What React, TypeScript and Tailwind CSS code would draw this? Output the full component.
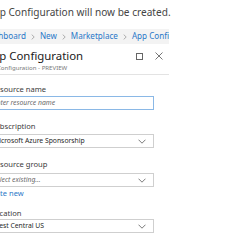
import React from "react";

const Chevron = () => (
  <svg width="8" height="5" viewBox="0 0 8 5" fill="none" className="shrink-0">
    <path d="M0.5 0.7 L4 4.2 L7.5 0.7" stroke="#6b6b6b" strokeWidth="0.9" />
  </svg>
);

const Sep = () => (
  <span className="flex w-[14px] shrink-0 justify-center">
    <svg width="4" height="6" viewBox="0 0 4 6" fill="none">
      <path d="M0.7 0.6 L3.2 3 L0.7 5.4" stroke="#9a9a9a" strokeWidth="0.8" />
    </svg>
  </span>
);

function Box({
  text,
  italic,
  focused,
  chevron,
}: {
  text: string;
  italic?: boolean;
  focused?: boolean;
  chevron?: boolean;
}) {
  return (
    <div
      className={`-ml-[10px] flex h-[14px] w-[164px] items-center justify-between border bg-white pr-[7px] ${
        focused ? "border-[#8ab8e6]" : "border-[#cfcfcf]"
      }`}
    >
      <span
        className={`ml-[2px] whitespace-nowrap text-[6.8px] leading-none ${
          italic ? "italic text-[#6a6a6a]" : "text-[#262626]"
        }`}
      >
        {text}
      </span>
      {chevron ? <Chevron /> : null}
    </div>
  );
}

function Label({ children, className = "" }: { children: React.ReactNode; className?: string }) {
  return (
    <div className={`-ml-[9px] whitespace-nowrap text-[7.6px] leading-[10px] text-[#3b3b3b] ${className}`}>
      {children}
    </div>
  );
}

export default function App() {
  return (
    <div
      className="relative h-[250px] w-[250px] overflow-hidden bg-white"
      style={{ fontFamily: '"Noto Sans", "Open Sans", sans-serif' }}
    >
      <div className="-ml-[13px] pt-[6px] whitespace-nowrap text-[10.1px] leading-[12px] text-[#454545]">
        App Configuration will now be created.
      </div>
      <div className="mt-[11px] flex h-[15px] w-[169px] items-center overflow-hidden whitespace-nowrap bg-[#f3f3f3] text-[8.1px] leading-none text-[#2a78c8]">
        <span className="-ml-[16px]">Dashboard</span>
        <Sep />
        <span>New</span>
        <Sep />
        <span>Marketplace</span>
        <Sep />
        <span>App Configuration</span>
      </div>
      <div className="mt-[5px] flex h-[14px] w-[169px] items-center justify-between">
        <span className="-ml-[15px] whitespace-nowrap text-[11.4px] leading-[14px] text-[#1a1a1a]">
          App Configuration
        </span>
        <div className="flex items-center gap-[12px] pr-[6px]">
          <div className="h-[7px] w-[7px] border border-[#666]" />
          <svg width="8" height="8" viewBox="0 0 8 8">
            <path d="M0.5 0.5 L7.5 7.5 M7.5 0.5 L0.5 7.5" stroke="#666" strokeWidth="0.9" />
          </svg>
        </div>
      </div>
      <div className="-ml-[16px] mt-[1px] whitespace-nowrap text-[6.1px] leading-[8px] text-[#7a7a7a]">
        App Configuration - PREVIEW
      </div>
      <div className="mt-[2px] h-px w-[169px] bg-[#e3e3e3]" />

      <Label className="mt-[9px]">Resource name</Label>
      <div className="mt-[2px]">
        <Box text="Enter resource name" italic focused />
      </div>

      <Label className="mt-[11px]">Subscription</Label>
      <div className="mt-[3px]">
        <Box text="Microsoft Azure Sponsorship" chevron />
      </div>

      <Label className="mt-[11px]">Resource group</Label>
      <div className="mt-[4px]">
        <Box text="Select existing..." italic chevron />
      </div>
      <div className="-ml-[16px] mt-[1px] whitespace-nowrap text-[7.5px] leading-[10px] text-[#2a78c8]">
        Create new
      </div>

      <Label className="mt-[10px]">Location</Label>
      <div className="mt-[1px]">
        <Box text="West Central US" chevron />
      </div>
    </div>
  );
}
